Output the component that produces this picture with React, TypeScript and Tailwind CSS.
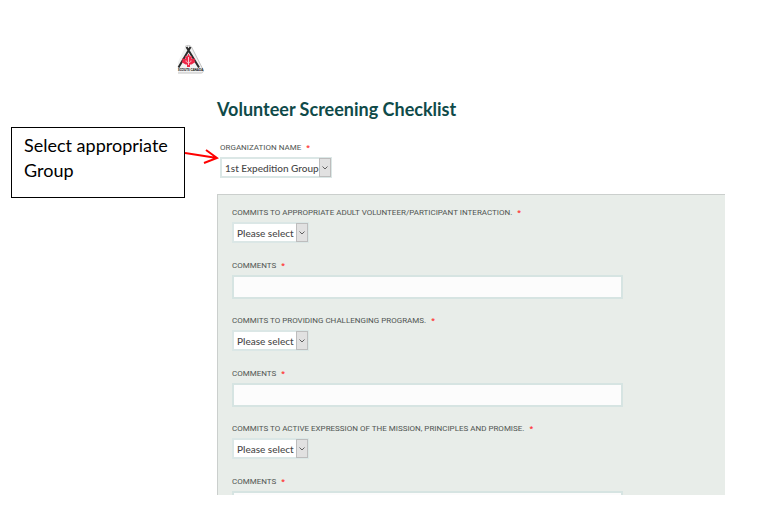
import { ReactNode } from "react";

const questions = [
  { id: "interaction", label: "COMMITS TO APPROPRIATE ADULT VOLUNTEER/PARTICIPANT INTERACTION." },
  { id: "programs", label: "COMMITS TO PROVIDING CHALLENGING PROGRAMS." },
  { id: "mission", label: "COMMITS TO ACTIVE EXPRESSION OF THE MISSION, PRINCIPLES AND PROMISE." },
];

function Logo() {
  return (
    <svg width="28" height="32" viewBox="0 0 28 32" role="img" aria-label="Scouts Canada">
      <path d="M1 18 L8 3 C9 1 13 1 14.500 3 L26 25 C27 27.500 26 29 24 29 H1 Z" fill="#f1f1f1" />
      <path
        d="M8 2.500 C10 1 13 1 14.500 3 L25.500 24.500 C27 27.500 26 29 24 29 H1"
        fill="none"
        stroke="#c4c4c4"
        strokeWidth="1"
      />
      <path d="M9.500 3 L22 23.500 M13.500 3 L1.500 23.500" fill="none" stroke="#2a2a2a" strokeWidth="2" />
      <path
        d="M11.500 9.500 L13 12.500 L15 12 L14.500 15 L18 14.500 L17.500 17 L18.500 18 L14.500 20.500 H13 V23 H10 V20.500 H8.500 L4.500 18 L5.500 17 L5 14.500 L8.500 15 L8 12 L10 12.500 Z"
        fill="#ee2748"
      />
      <path
        d="M11.500 13 V21 M9 16.500 C9 18 10 18.500 11.500 18.500 C13 18.500 14 18 14 16.500"
        fill="none"
        stroke="#fac3cd"
        strokeWidth="1"
      />
      <text x="1" y="27" fontSize="3" fontWeight="900" fill="#111" fontFamily="Lato, sans-serif">
        SCOUTS CANADA
      </text>
    </svg>
  );
}

function FieldLabel({ htmlFor, children }: { htmlFor: string; children: ReactNode }) {
  return (
    <label
      htmlFor={htmlFor}
      className="flex h-3 items-center gap-[5px] font-[Roboto,sans-serif] text-[8px] leading-3 text-[#505552] whitespace-nowrap"
    >
      {children}
      <span className="font-bold text-[#f33]">*</span>
    </label>
  );
}

function SelectBox({ id, option, className }: { id: string; option: string; className: string }) {
  return (
    <div className={`relative mt-[3px] h-[21px] ${className}`}>
      <select
        id={id}
        className="block h-full w-full appearance-none border-2 border-[#dbe7e6] bg-white pl-[3px] text-[10px] leading-4 font-medium text-[#484848] outline-none"
      >
        <option>{option}</option>
      </select>
      <span className="pointer-events-none absolute inset-y-px right-px flex w-3 items-center justify-center border border-[#bdbdbd] bg-[#e1e1e1]">
        <svg width="6" height="4" viewBox="0 0 6 4" fill="none" stroke="#606060">
          <path d="M0.500 0.500 L3 3 L5.500 0.500" />
        </svg>
      </span>
    </div>
  );
}

function Callout() {
  return (
    <div className="mt-[51px] flex pl-[11px]">
      <div className="h-[71px] w-[174px] shrink-0 border border-black bg-white px-3 pt-[5px] text-[18px] leading-[25px] text-black">
        Select appropriate Group
      </div>
      <svg className="mt-5 shrink-0" width="34" height="18" viewBox="0 0 34 18" fill="none" stroke="#f00" strokeWidth="2">
        <path d="M0 6 L32 11 M21 3 L32 11 L19 16" />
      </svg>
    </div>
  );
}

export default function App() {
  return (
    <div className="flex h-screen overflow-hidden bg-white pr-[37px] pb-3 font-[Lato,sans-serif]">
      {/* Logo and annotation */}
      <aside className="w-[217px] shrink-0 pt-11">
        <div className="flex justify-end pr-3">
          <Logo />
        </div>
        <Callout />
      </aside>

      <main className="flex min-w-0 flex-1 flex-col pt-[97px]">
        <h1 className="text-[18px] leading-6 font-bold text-[#0f4a49]">Volunteer Screening Checklist</h1>

        <div className="mt-[21px] pl-[3px]">
          <FieldLabel htmlFor="organization">ORGANIZATION NAME</FieldLabel>
          <SelectBox id="organization" option="1st Expedition Group" className="w-28" />
        </div>

        {/* Checklist */}
        <section className="mt-4 min-h-0 flex-1 overflow-hidden border-t border-l border-[#cbcfcd] bg-[#e8ede9] pt-3 pl-3.5">
          {questions.map((q) => (
            <div key={q.id} className="mb-4">
              <FieldLabel htmlFor={q.id}>{q.label}</FieldLabel>
              <SelectBox id={q.id} option="Please select" className="w-[77px]" />
              <div className="mt-[17px]">
                <FieldLabel htmlFor={`${q.id}-comments`}>COMMENTS</FieldLabel>
                <input
                  id={`${q.id}-comments`}
                  type="text"
                  className="mt-[3px] block h-6 w-[391px] max-w-full border-2 border-[#d6e4e2] bg-[#fcfcfc] px-1 text-[10px] outline-none"
                />
              </div>
            </div>
          ))}
        </section>
      </main>
    </div>
  );
}
